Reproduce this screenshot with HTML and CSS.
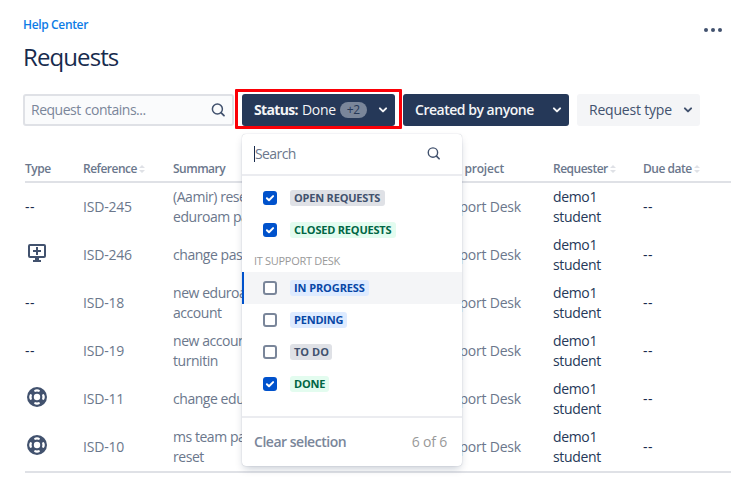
FILE: index.html
```html
<!DOCTYPE html>
<html lang="en">
<head>
<meta charset="utf-8">
<title>Requests</title>
<link rel="stylesheet" href="styles.css">
</head>
<body>
<svg class="sprite" aria-hidden="true">
  <symbol id="search" viewBox="0 0 16 16"><circle cx="7.4" cy="7" r="5" fill="none" stroke="currentColor" stroke-width="1.5"/><path d="M11.2 10.8l2.8 2.8" stroke="currentColor" stroke-width="1.8" stroke-linecap="round"/></symbol>
  <symbol id="chevron" viewBox="0 0 10 8"><path d="M1.9 2.4L5 5.4l3.1-3" fill="none" stroke="currentColor" stroke-width="2" stroke-linecap="round" stroke-linejoin="round"/></symbol>
  <symbol id="sort" viewBox="0 0 6 8"><path d="M3 0l3 3H0zM3 8L0 5h6z" fill="currentColor"/></symbol>
  <symbol id="tick" viewBox="0 0 14 14"><path d="M3.9 7.2l2.1 2 4.1-4.1" fill="none" stroke="currentColor" stroke-width="2" stroke-linecap="round" stroke-linejoin="round"/></symbol>
  <symbol id="screen" viewBox="0 0 18 18"><rect x="1" y="1" width="16" height="12" rx="1" fill="none" stroke="currentColor" stroke-width="2"/><path d="M9 3v8M5 7h8" stroke="currentColor" stroke-width="2"/><path d="M7 14h4v2h2v2H5v-2h2z" fill="currentColor"/></symbol>
  <symbol id="buoy" viewBox="0 0 20 20"><circle cx="10" cy="10" r="10" fill="currentColor"/><circle cx="10" cy="10" r="3.2" fill="#fff"/><g fill="#fff"><path id="slot" d="M7 3.2Q10 1.2 13 3.2L12.2 5Q10 4.2 7.8 5z"/><use href="#slot" transform="rotate(90 10 10)"/><use href="#slot" transform="rotate(180 10 10)"/><use href="#slot" transform="rotate(270 10 10)"/></g></symbol>
</svg>

<header class="header">
  <div>
    <a class="crumb">Help Center</a>
    <h1 class="title">Requests</h1>
  </div>
  <div class="more"><i></i><i></i><i></i></div>
</header>

<div class="filters">
  <div class="search"><span>Request contains...</span><svg class="lens"><use href="#search"/></svg></div>
  <div class="status">
    <div class="btn dark status-btn"><b>Status:</b><span class="value">Done</span><span class="count">+2</span><svg class="chev"><use href="#chevron"/></svg></div>
    <div class="highlight"></div>
    <div class="menu">
      <div class="menu-search"><span>Search</span><svg class="lens"><use href="#search"/></svg></div>
      <div class="options">
        <div class="option"><span class="box on"><svg><use href="#tick"/></svg></span><span class="tag grey t-open">OPEN REQUESTS</span></div>
        <div class="option"><span class="box on"><svg><use href="#tick"/></svg></span><span class="tag green t-closed">CLOSED REQUESTS</span></div>
        <div class="group">IT SUPPORT DESK</div>
        <div class="option active"><span class="box"></span><span class="tag blue t-progress">IN PROGRESS</span></div>
        <div class="option"><span class="box"></span><span class="tag blue t-pending">PENDING</span></div>
        <div class="option"><span class="box"></span><span class="tag grey t-todo">TO DO</span></div>
        <div class="option"><span class="box on"><svg><use href="#tick"/></svg></span><span class="tag green t-done">DONE</span></div>
      </div>
      <div class="menu-foot"><span class="clear">Clear selection</span><span class="total">6 of 6</span></div>
    </div>
  </div>
  <div class="btn dark created"><span>Created by anyone</span><svg class="chev"><use href="#chevron"/></svg></div>
  <div class="btn light"><span>Request type</span><svg class="chev"><use href="#chevron"/></svg></div>
</div>

<div class="table">
  <div class="row head"><span>Type</span><span>Reference<svg class="sort"><use href="#sort"/></svg></span><span>Summary</span><span class="proj">Service project</span><span>Requester<svg class="sort"><use href="#sort"/></svg></span><span>Due date<svg class="sort"><use href="#sort"/></svg></span></div>
  <div class="row"><span class="none">--</span><span>ISD-245</span><span class="sum">(Aamir) reset<br>eduroam pass</span><span class="proj">IT Support Desk</span><span class="ink">demo1<br>student</span><span class="none">--</span></div>
  <div class="row"><span><svg class="screen"><use href="#screen"/></svg></span><span>ISD-246</span><span class="sum">change pass</span><span class="proj">IT Support Desk</span><span class="ink">demo1<br>student</span><span class="none">--</span></div>
  <div class="row"><span class="none">--</span><span>ISD-18</span><span class="sum">new eduroam<br>account</span><span class="proj">IT Support Desk</span><span class="ink">demo1<br>student</span><span class="none">--</span></div>
  <div class="row"><span class="none">--</span><span>ISD-19</span><span class="sum">new account<br>turnitin</span><span class="proj">IT Support Desk</span><span class="ink">demo1<br>student</span><span class="none">--</span></div>
  <div class="row"><span><svg class="buoy"><use href="#buoy"/></svg></span><span>ISD-11</span><span class="sum">change eduroam</span><span class="proj">IT Support Desk</span><span class="ink">demo1<br>student</span><span class="none">--</span></div>
  <div class="row"><span><svg class="buoy"><use href="#buoy"/></svg></span><span>ISD-10</span><span class="sum">ms team pass<br>reset</span><span class="proj">IT Support Desk</span><span class="ink">demo1<br>student</span><span class="none">--</span></div>
</div>
</body>
</html>
```
FILE: styles.css
```css
* { box-sizing: border-box; }
body { margin: 0; padding: 15px 16px 0 23px; width: 747px; height: 492px; overflow: hidden; background: #fff; color: #6b778c; font: 14px/20px "Open Sans", "Noto Sans", sans-serif; letter-spacing: -0.2px; white-space: nowrap; }
svg { display: block; flex: none; }
.sprite { position: absolute; width: 0; height: 0; }
.header { display: flex; justify-content: space-between; height: 79px; }
.crumb { display: block; font-size: 12px; font-weight: 600; color: #0c7ce6; letter-spacing: -0.35px; }
.title { margin: 6px 0 0; font-size: 24px; line-height: 32px; font-weight: 500; color: #172b4d; letter-spacing: -0.9px; }
.more { display: flex; gap: 3px; margin: 13px 9px 0 0; }
.more i { width: 4px; height: 4px; border-radius: 50%; background: #42526e; }
.filters { display: flex; gap: 8px; height: 32px; }
.search { display: flex; justify-content: space-between; align-items: center; width: 211px; padding: 0 6px; border: 2px solid #dfe1e6; border-radius: 3px; background: #fafbfc; color: #7a869a; letter-spacing: -0.5px; word-spacing: 1px; }
.lens { width: 16px; height: 16px; color: #42526e; }
.status { position: relative; width: 153px; }
.btn { display: flex; align-items: center; height: 32px; border-radius: 3px; font-weight: 600; padding: 0 7px 0 12px; }
.dark { background: #253858; color: #f4f5f7; }
.light { background: #f4f5f7; color: #42526e; width: 123px; font-weight: 500; }
.created { width: 166px; letter-spacing: -0.48px; }
.chev { width: 10px; height: 8px; margin-left: auto; }
.status-btn { letter-spacing: -0.3px; }
.status-btn b { font-weight: 700; letter-spacing: -0.65px; }
.value { margin-left: 4px; font-weight: 500; }
.count { margin-left: 4px; width: 27px; height: 16px; border-radius: 8px; background: #7a869a; color: #253858; font-size: 12px; line-height: 16px; font-weight: 400; text-align: center; }
.highlight { position: absolute; left: -7px; top: -5px; width: 167px; height: 40px; border: 3px solid #fb0007; border-radius: 1px; }
.menu { position: absolute; z-index: 2; left: 0; top: 40px; width: 220px; height: 332px; border-radius: 4px; background: #fff; box-shadow: 0 4px 8px -2px rgba(9,30,66,.25), 0 0 1px rgba(9,30,66,.31); }
.menu-search { display: flex; justify-content: space-between; align-items: center; height: 42px; padding: 0 21px 0 12px; border-bottom: 2px solid #ebecf0; letter-spacing: -0.6px; }
.menu-search span { border-left: 1px solid #172b4d; line-height: 16px; }
.menu-search .lens { width: 15px; height: 15px; margin-top: -2px; }
.options { height: 242px; padding-top: 6px; border-bottom: 2px solid #ebecf0; }
.option { display: flex; align-items: center; height: 32px; padding-left: 21px; }
.active { padding-left: 19px; border-left: 2px solid #0052cc; background: #f4f5f7; }
.box { width: 14px; height: 14px; border: 2px solid #7a869a; border-radius: 3px; background: #fff; }
.on { border: 0; background: #0052cc; color: #fff; }
.on svg { width: 14px; height: 14px; }
.tag { margin-left: 13px; height: 16px; padding: 0 4px; border-radius: 3px; font-size: 11px; line-height: 16px; font-weight: 700; }
.grey { background: #dfe1e6; color: #42526e; }
.green { background: #e3fcef; color: #006644; }
.blue { background: #deebff; color: #0747a6; }
.t-open { width: 95px; }
.t-closed { width: 106px; }
.t-progress { width: 79px; letter-spacing: -0.1px; }
.t-pending { width: 57px; }
.t-todo { width: 42px; letter-spacing: 0; }
.t-done { width: 39px; }
.group { height: 26px; padding: 7px 0 0 12px; font-size: 11px; line-height: 16px; color: #999; letter-spacing: -0.3px; }
.menu-foot { display: flex; justify-content: space-between; align-items: center; height: 48px; padding: 0 15px 0 12px; }
.clear { font-weight: 600; color: #7a869a; letter-spacing: -0.48px; }
.total { color: #999; }
.table { margin: 28px 0 0 2px; width: 706px; border-bottom: 2px solid #dfe1e6; }
.row { display: grid; grid-template-columns: 58px 90px 220px 160px 90px 88px; align-items: center; height: 48px; }
.head { height: 29px; padding-top: 2px; border-bottom: 2px solid #dfe1e6; font-size: 12px; font-weight: 600; color: #6b778c; letter-spacing: -0.5px; }
.head span { display: flex; align-items: center; }
.sum { letter-spacing: -0.45px; }
.ink { color: #253858; letter-spacing: -0.35px; }
.none { color: #172b4d; letter-spacing: 0.5px; }
.sort { width: 6px; height: 8px; margin-left: 2px; color: #dfe1e6; }
.screen { width: 18px; height: 18px; margin: -5px 0 0 3px; color: #42526e; }
.buoy { width: 20px; height: 20px; margin: -5px 0 0 2px; color: #42526e; }
.row .proj { justify-self: end; margin-right: 32px; }
.head .proj { margin-right: 49px; letter-spacing: -0.2px; }
```
